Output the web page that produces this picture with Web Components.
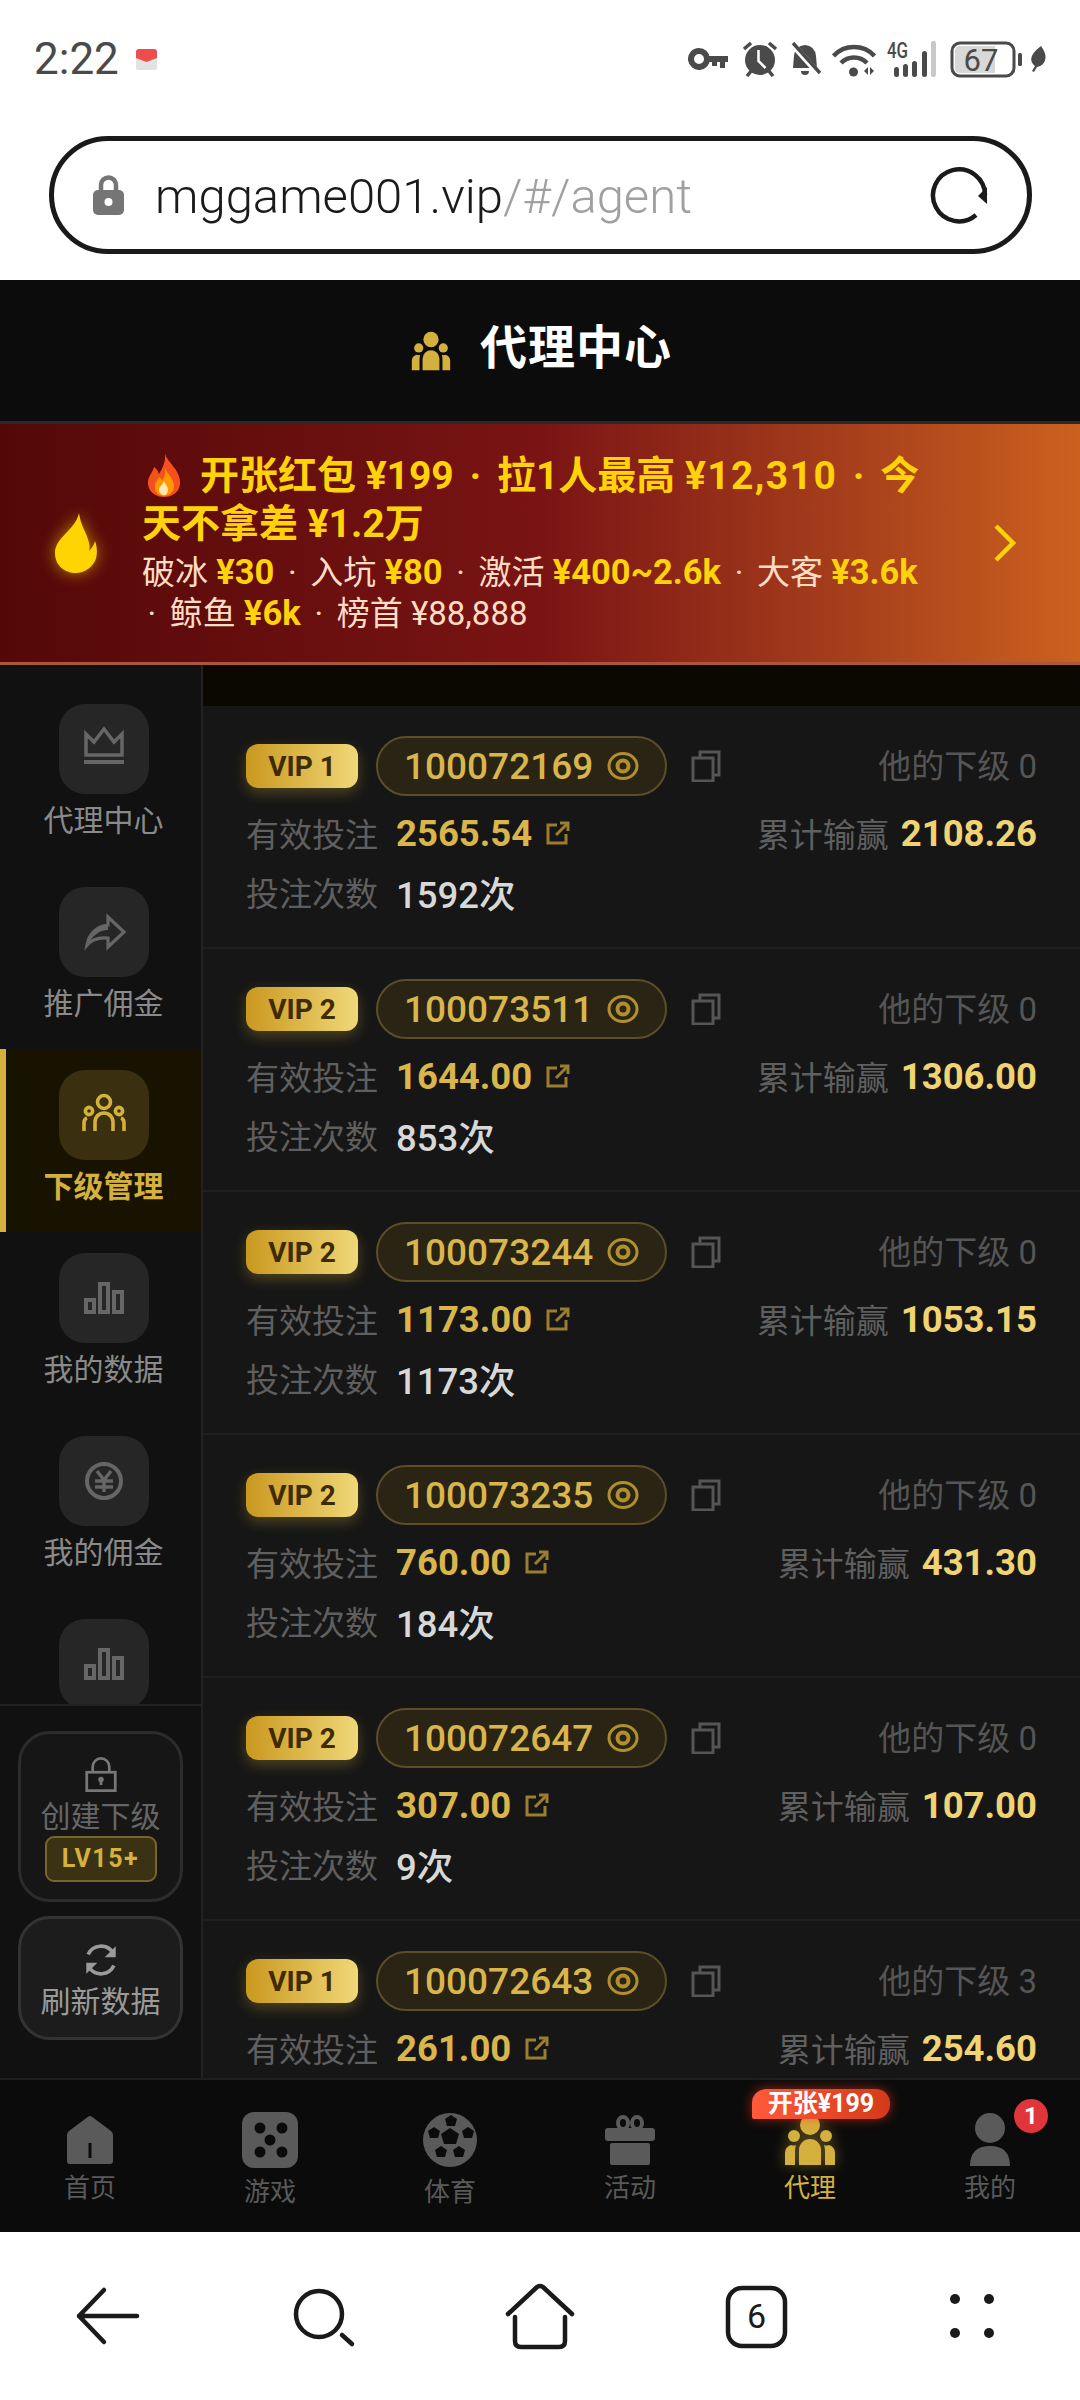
<!DOCTYPE html>
<html>
<head>
<meta charset="utf-8">
<style>
  html, body { margin: 0; padding: 0; background: #fff; }
  body { font-family: Roboto, "Noto Sans CJK SC", sans-serif; width: 1080px; height: 2400px; overflow: hidden; display: flex; flex-direction: column; }
  .fill { height: 1413px; flex: none; display: flex; overflow: hidden; }
  promo-banner b { color: #ffd20a; font-size: 34.500px; }
  promo-banner i { font-style: normal; margin: 0 5.500px; }
  promo-banner em { font-style: normal; letter-spacing: 1.4px; }
  promo-banner [slot="title"] i { margin: 0 6px; }
</style>
</head>
<body>
<status-bar></status-bar>
<url-bar host="mggame001.vip" path="/#/agent"></url-bar>
<agent-header>代理中心</agent-header>
<promo-banner>
  <span slot="title">开张红包 ¥199 <i>·</i> 拉1人最高 <em>¥12,310</em> <i>·</i> 今天不拿差 ¥1.2万</span>
  <span slot="sub">破冰 <b>¥30</b> <i>·</i> 入坑 <b>¥80</b> <i>·</i> 激活 <b>¥400~2.6k</b> <i>·</i> 大客 <b>¥3.6k</b> <i>·</i> 鲸鱼 <b>¥6k</b> <i>·</i> 榜首 ¥88,888</span>
</promo-banner>
<div class="fill">
  <side-nav>
    <side-item icon="crown">代理中心</side-item>
    <side-item icon="share">推广佣金</side-item>
    <side-item icon="team" active>下级管理</side-item>
    <side-item icon="bars">我的数据</side-item>
    <side-item icon="coin">我的佣金</side-item>
    <side-item icon="bars"></side-item>
    <side-action slot="footer" icon="lock" level="LV15+" dim>创建下级</side-action>
    <side-action slot="footer" icon="sync">刷新数据</side-action>
  </side-nav>
  <member-list>
    <member-card vip="VIP 1" uid="100072169" bet="2565.54" win="2108.26" count="1592次" subs="0"></member-card>
    <member-card vip="VIP 2" uid="100073511" bet="1644.00" win="1306.00" count="853次" subs="0"></member-card>
    <member-card vip="VIP 2" uid="100073244" bet="1173.00" win="1053.15" count="1173次" subs="0"></member-card>
    <member-card vip="VIP 2" uid="100073235" bet="760.00" win="431.30" count="184次" subs="0"></member-card>
    <member-card vip="VIP 2" uid="100072647" bet="307.00" win="107.00" count="9次" subs="0"></member-card>
    <member-card vip="VIP 1" uid="100072643" bet="261.00" win="254.60" subs="3"></member-card>
  </member-list>
</div>
<bottom-nav>
  <nav-item icon="home">首页</nav-item>
  <nav-item icon="game" low>游戏</nav-item>
  <nav-item icon="ball" low>体育</nav-item>
  <nav-item icon="gift">活动</nav-item>
  <nav-item icon="agent" active tag="开张¥199">代理</nav-item>
  <nav-item icon="me" dot="1">我的</nav-item>
</bottom-nav>
<system-nav></system-nav>

<script>
const FONT = 'Roboto, "Noto Sans CJK SC", sans-serif';

const AGENT_SHAPE = `
  <circle cx="30" cy="15" r="10"/><circle cx="14" cy="26" r="6"/><circle cx="46" cy="26" r="6"/>
  <path d="M19 55V40a11 11 0 0 1 22 0v15z"/>
  <path d="M5 55V43q0-6 6-8q3 1 5 0q-1 3-1 6v14z"/><path d="M55 55V43q0-6-6-8q-3 1-5 0q1 3 1 6v14z"/>`;

const SIDE_ICONS = {
  crown: `<path d="M7 10l8 8 10-13 10 13 8-8v21H7z" fill="none" stroke="currentColor" stroke-width="3.500"/><rect x="5" y="36" width="40" height="4" fill="currentColor"/>`,
  share: `<path d="M29 10l16 15-16 15v-9c-10-1-16 1-21 7 2-11 10-19 21-20z" fill="none" stroke="currentColor" stroke-width="3.200"/><path d="M8 38c2-11 10-18 21-20v5c-9 0-15 6-21 15z" fill="currentColor"/>`,
  team: `<g fill="none" stroke="currentColor" stroke-width="3.600"><circle cx="25" cy="12" r="6.500"/><circle cx="10" cy="21" r="3.600"/><circle cx="40" cy="21" r="3.600"/><path d="M16 41V32a9 9 0 0 1 18 0v9"/><path d="M5 41V33q0-4 3-5"/><path d="M45 41V33q0-4-3-5"/></g>`,
  bars: `<g fill="none" stroke="currentColor" stroke-width="4"><rect x="7" y="27" width="8" height="12"/><rect x="21" y="11" width="8" height="28"/><rect x="35" y="19" width="8" height="20"/></g>`,
  coin: `<circle cx="25" cy="25" r="17" fill="none" stroke="currentColor" stroke-width="4"/><path d="M18 15l7 9 7-9M16 25h18M16 31h18M25 24v12" fill="none" stroke="currentColor" stroke-width="3.400"/>`,
  lock: `<path d="M16 22v-6a9 9 0 0 1 18 0v6" fill="none" stroke="currentColor" stroke-width="3"/><rect x="9.500" y="22" width="31" height="20" fill="none" stroke="currentColor" stroke-width="3"/><circle cx="25" cy="30" r="3" fill="currentColor"/><rect x="23.500" y="30" width="3" height="6" fill="currentColor"/>`,
  sync: `<g fill="none" stroke="currentColor" stroke-width="4"><path d="M11 19a15.500 15.500 0 0 1 27-2"/><path d="M39 31a15.500 15.500 0 0 1-27 2"/></g><path d="M41 10v12H29zM9 40V28h12z" fill="currentColor"/>`
};

const NAV_ICONS = {
  home: `<path d="M30 6q1.500 0 3 1.500L51 21q2 2 2 4v26q0 3-3 3H10q-3 0-3-3V25q0-2 2-4L27 7.500Q28.500 6 30 6z"/><rect x="28.500" y="33" width="3" height="15" fill="#0b0b0b"/>`,
  game: `<rect x="2" y="2" width="56" height="56" rx="12"/><g fill="#0b0b0b"><circle cx="20" cy="18" r="5.500"/><circle cx="42" cy="18" r="5.500"/><circle cx="30" cy="30" r="5.500"/><circle cx="20" cy="42" r="5.500"/><circle cx="42" cy="42" r="5.500"/></g>`,
  ball: `<circle cx="30" cy="30" r="27"/><g fill="#0b0b0b"><path d="M31 5l6 4-2 7h-8l-2-7z"/><path d="M14 17l6 4-2 7h-8l-2-7z"/><path d="M48 17l6 4-2 7h-8l-2-7z"/><path d="M30 18l9 6-3 10H24l-3-10z"/><path d="M21 36l6 4-2 7h-8l-2-7z"/><path d="M39 36l6 4-2 7h-8l-2-7z"/></g>`,
  gift: `<g fill="none" stroke="#5a5a5a" stroke-width="4"><ellipse cx="23" cy="13" rx="5" ry="6"/><ellipse cx="37" cy="13" rx="5" ry="6"/></g><rect x="5" y="18" width="50" height="13" rx="3"/><rect x="10" y="33" width="40" height="22" rx="2"/>`,
  agent: AGENT_SHAPE,
  me: `<ellipse cx="30" cy="18" rx="15" ry="15"/><path d="M10 56q0-20 20-20t20 20z"/>`
};

class StatusBar extends HTMLElement {
  constructor() {
    super();
    this.attachShadow({ mode: 'open' });
    this.shadowRoot.innerHTML = `
      <style>
        :host { display: flex; height: 118px; padding: 0 33px 0 34px; align-items: center; background: #fff; color: #4a4a4a; font-family: ${FONT}; }
        .time { font-size: 44px; line-height: 1; margin-right: 16px; }
        .right { margin-left: auto; display: flex; align-items: center; }
        svg { display: block; }
      </style>
      <span class="time">2:22</span>
      <svg width="23" height="22" viewBox="0 0 23 22"><rect x="1" y="5" width="21" height="17" rx="2" fill="#e2e2e2"/><path d="M1 4q0-3 3-3h15q3 0 3 3v6l-10.500 4L1 10z" fill="#ee4d4d"/></svg>
      <div class="right">
        <svg width="40" height="22" viewBox="0 0 40 22" fill="#4a4a4a"><path fill-rule="evenodd" d="M11 0a11 11 0 1 1-10.900 12.500A11 11 0 0 1 11 0zm0 6a5 5 0 1 0 0 10 5 5 0 0 0 0-10z"/><path d="M20 8h20v6h-3v6h-5v-6h-3v4h-5v-4h-4z"/></svg>
        <svg style="margin-left:14px" width="36" height="36" viewBox="0 0 36 36" fill="#4a4a4a"><circle cx="18" cy="19" r="15"/><path d="M16.500 9v11l7 7" fill="none" stroke="#fff" stroke-width="2.500"/><path d="M2 8l7-6M34 8l-7-6M5 35l5-6M31 35l-5-6" stroke="#4a4a4a" stroke-width="3.500" fill="none"/></svg>
        <svg style="margin-left:12px" width="31" height="34" viewBox="0 0 31 34" fill="#4a4a4a"><path d="M15 3q10 1 11 11l1 12H3l1-12q1-10 11-11z"/><path d="M11 29h8a4 4 0 0 1-8 0z"/><path d="M2 2l27 30" stroke="#fff" stroke-width="6"/><path d="M3 1l27 30" stroke="#4a4a4a" stroke-width="3.500"/></svg>
        <svg style="margin-left:11px" width="44" height="35" viewBox="0 0 44 35"><g fill="none" stroke="#4a4a4a" stroke-width="4.500"><path d="M1.500 14a28 28 0 0 1 41 0"/><path d="M9 21a18 18 0 0 1 26 0"/></g><circle cx="21.500" cy="30" r="4.500" fill="#4a4a4a"/><path d="M32 29l4-4v8zM38 25l4 4-4 4z" fill="#4a4a4a"/></svg>
        <svg style="margin-left:11px;margin-top:-4px" width="49" height="42" viewBox="0 -4 49 42"><text x="0" y="18" font-family="Roboto" font-size="22" font-weight="500" fill="#4a4a4a" textLength="21" lengthAdjust="spacingAndGlyphs">4G</text><g fill="#4a4a4a"><rect x="7" y="27" width="5" height="10" rx="2.500"/><rect x="16" y="24" width="5" height="13" rx="2.500"/><rect x="25" y="21" width="5" height="16" rx="2.500"/><rect x="35" y="11" width="5" height="26" rx="2.500"/></g><rect x="44" y="1" width="5" height="36" rx="2" fill="#c9c9c9"/></svg>
        <svg style="margin-left:14px" width="72" height="37" viewBox="0 0 72 37"><rect x="2" y="2" width="62" height="33" rx="8" fill="#fff" stroke="#4a4a4a" stroke-width="3"/><path d="M5 10q0-5 5-5h35v27H10q-5 0-5-5z" fill="#d8d8d8"/><text x="31" y="29.500" text-anchor="middle" font-family="Roboto" font-size="31" fill="#4a4a4a">67</text><rect x="68" y="12" width="4" height="13" rx="1.500" fill="#4a4a4a"/></svg>
        <svg style="margin-left:6px" width="19" height="26" viewBox="0 0 19 26"><path d="M13 0q8 11 2 18-3 3-6 3l-3 5-2-1 3-5Q-3 12 13 0z" fill="#4a4a4a"/></svg>
      </div>
    `;
  }
}
customElements.define('status-bar', StatusBar);

class UrlBar extends HTMLElement {
  constructor() {
    super();
    this.attachShadow({ mode: 'open' });
    this.shadowRoot.innerHTML = `
      <style>
        :host { display: block; background: #fff; padding: 18px 48px 26px 49px; font-family: ${FONT}; }
        .bar { height: 118px; box-sizing: border-box; border: 5px solid #1a1a1a; border-radius: 59px; display: flex; align-items: center; padding: 0 38px 0 39px; }
        .addr { margin-left: 31px; font-size: 49px; font-weight: 300; color: #1a1a1a; white-space: nowrap; margin-top: 2px; }
        .addr span { color: #a0a0a0; }
        svg { display: block; flex: none; }
        .reload { margin-left: auto; }
      </style>
      <div class="bar">
        <svg width="31" height="40" viewBox="0 0 31 40"><path d="M8 17V10a7.500 7.500 0 0 1 15 0v7" fill="none" stroke="#757575" stroke-width="4.500"/><rect x="0" y="15" width="31" height="25" rx="5" fill="#757575"/><circle cx="15.500" cy="27" r="4" fill="#fff"/></svg>
        <div class="addr">${this.getAttribute('host')}<span>${this.getAttribute('path')}</span></div>
        <svg class="reload" width="60" height="60" viewBox="0 0 60 60"><path d="M47 50A26 26 0 1 1 56 30" fill="none" stroke="#1a1a1a" stroke-width="4.500"/><path d="M58 22v17l-9-8z" fill="#1a1a1a"/></svg>
      </div>
    `;
  }
}
customElements.define('url-bar', UrlBar);

class AgentHeader extends HTMLElement {
  constructor() {
    super();
    this.attachShadow({ mode: 'open' });
    this.shadowRoot.innerHTML = `
      <style>
        :host { display: flex; height: 141px; background: #0c0c0c; align-items: center; justify-content: center; gap: 26px; color: #fff; font-family: ${FONT}; font-size: 47px; line-height: 50px; font-weight: 700; letter-spacing: 1px; border-bottom: 3px solid #2a2a2a; }
        .name { margin-top: -6px; }
        svg { display: block; fill: #d4b03e; }
      </style>
      <svg width="46" height="46" viewBox="0 0 60 60">${AGENT_SHAPE}</svg>
      <div class="name"><slot></slot></div>
    `;
  }
}
customElements.define('agent-header', AgentHeader);

class PromoBanner extends HTMLElement {
  constructor() {
    super();
    this.attachShadow({ mode: 'open' });
    this.shadowRoot.innerHTML = `
      <style>
        :host { display: flex; height: 241px; box-sizing: border-box; align-items: center; background: linear-gradient(90deg, #530808 0%, #7a1414 50%, #a63e1c 78%, #cb611e 100%); border-bottom: 3px solid #a8573a; font-family: ${FONT}; padding-left: 55px; }
        .flame { flex: none; filter: drop-shadow(0 0 8px rgba(255,190,0,.65)); }
        .text { margin-left: 45px; width: 785px; flex: none; }
        .title { font-size: 39px; line-height: 48px; font-weight: 700; color: #ffd20a; }
        .title svg { width: 38px; height: 43px; vertical-align: -8px; margin-left: 3px; margin-right: 17px; }
        .sub { font-size: 33px; line-height: 40px; color: #ffdcc4; margin-top: 4px; }
        .chev { margin-left: 66px; flex: none; }
      </style>
      <svg class="flame" width="42" height="60" viewBox="0 0 42 60"><path d="M24 0C26 14 32 20 34 30C35 34 34.500 36 34 38C37 35 39 32 40 28C43 36 42 44 40 48C36 56 28 60 21 60C9 60 0 52 0 40C0 24 20 18 24 0Z" fill="#ffd400"/></svg>
      <div class="text">
        <div class="title"><svg viewBox="0 0 38 43"><path d="M20 0c3 9 14 15 15 27 1 10-7 16-16 16S2 37 3 27c1-6 5-9 6-14 3 2 4 4 5 7 3-5 7-12 6-20z" fill="#f4511e"/><path d="M20 14c2 6 9 10 9 18 0 6-5 10-10 10S9 38 10 32c0-4 3-6 4-9 2 1 3 3 3 4 2-3 4-8 3-13z" fill="#ff9800"/><path d="M19 27c1 3 4 5 4 9 0 3-2 5-4 5s-5-2-5-5c0-4 4-5 5-9z" fill="#ffe9b0"/></svg><slot name="title"></slot></div>
        <div class="sub"><slot name="sub"></slot></div>
      </div>
      <svg class="chev" width="24" height="38" viewBox="0 0 24 38"><path d="M3 2l17 17L3 36" fill="none" stroke="#ffd20a" stroke-width="4.500"/></svg>
    `;
  }
}
customElements.define('promo-banner', PromoBanner);

class SideNav extends HTMLElement {
  constructor() {
    super();
    this.attachShadow({ mode: 'open' });
    this.shadowRoot.innerHTML = `
      <style>
        :host { display: flex; flex-direction: column; width: 203px; box-sizing: border-box; flex: none; background: #111; border-right: 2px solid #222; font-family: ${FONT}; }
        .scroll { height: 1039px; box-sizing: border-box; padding-top: 18px; overflow: hidden; flex: none; }
        .foot { flex: 1; border-top: 2px solid #222; padding: 25px 18px 0; display: flex; flex-direction: column; gap: 14px; }
      </style>
      <div class="scroll"><slot></slot></div>
      <div class="foot"><slot name="footer"></slot></div>
    `;
  }
}
customElements.define('side-nav', SideNav);

class SideItem extends HTMLElement {
  constructor() {
    super();
    this.attachShadow({ mode: 'open' });
    this.shadowRoot.innerHTML = `
      <style>
        :host { display: flex; flex-direction: column; align-items: center; height: 183px; box-sizing: border-box; padding: 21px 0 0 6px; color: #8a8a8a; font-size: 30px; line-height: 40px; position: relative; }
        :host([active]) { background: #181300; color: #d4b03e; font-weight: 700; }
        :host([active])::before { content: ""; position: absolute; left: 0; top: 0; bottom: 0; width: 6px; background: #d4b03e; }
        .box { width: 90px; height: 90px; border-radius: 26px; background: #262626; color: #666; display: flex; align-items: center; justify-content: center; margin-bottom: 7px; }
        :host([active]) .box { background: #3a2f0e; color: #d4b03e; }
        svg { display: block; }
      </style>
      <div class="box"><svg width="50" height="50" viewBox="0 0 50 50">${SIDE_ICONS[this.getAttribute('icon')]}</svg></div>
      <slot></slot>
    `;
  }
}
customElements.define('side-item', SideItem);

class SideAction extends HTMLElement {
  constructor() {
    super();
    this.attachShadow({ mode: 'open' });
    const level = this.getAttribute('level');
    this.shadowRoot.innerHTML = `
      <style>
        :host { display: flex; flex-direction: column; align-items: center; box-sizing: border-box; border: 3px solid #333; border-radius: 32px; background: #1c1c1c; padding: 24px 0 16px; color: #9a9a9a; font-size: 30px; line-height: 38px; }
        :host([dim]) { background: #161616; color: #666; padding-bottom: 17px; border-color: #2c2c2c; }
        :host([dim]) svg { color: #777; }
        svg { display: block; margin-top: -6px; }
        .lv { width: 112px; height: 46px; box-sizing: border-box; border: 2px solid #7a6528; border-radius: 9px; background: #3b3214; color: #d6b13f; font-weight: 700; font-size: 25px; letter-spacing: 1.5px; display: flex; align-items: center; justify-content: center; font-family: ${FONT}; }
      </style>
      <svg width="46" height="46" viewBox="0 0 50 50">${SIDE_ICONS[this.getAttribute('icon')]}</svg>
      <slot></slot>
      ${level ? `<div class="lv">${level}</div>` : ''}
    `;
  }
}
customElements.define('side-action', SideAction);

class MemberList extends HTMLElement {
  constructor() {
    super();
    this.attachShadow({ mode: 'open' });
    this.shadowRoot.innerHTML = `
      <style>
        :host { display: block; flex: 1; min-width: 0; overflow: hidden; background: #161616; }
        .strip { height: 41px; background: #0a0800; }
      </style>
      <div class="strip"></div>
      <slot></slot>
    `;
  }
}
customElements.define('member-list', MemberList);

class MemberCard extends HTMLElement {
  constructor() {
    super();
    this.attachShadow({ mode: 'open' });
    const a = (n) => this.getAttribute(n);
    this.shadowRoot.innerHTML = `
      <style>
        :host { display: block; height: 243px; box-sizing: border-box; padding: 30px 43px 26px; border-bottom: 2px solid #1f1f1f; background: #161616; font-family: ${FONT}; }
        .row { display: flex; align-items: center; }
        .top { height: 60px; margin-bottom: 9px; }
        .line { height: 56px; margin-bottom: 3px; font-size: 33px; color: #5f5f5f; white-space: nowrap; }
        .vip { width: 112px; height: 44px; border-radius: 12px; background: linear-gradient(90deg, #c9981f, #f0d878); color: #3f2b00; font-size: 28px; font-weight: 700; display: flex; align-items: center; justify-content: center; box-shadow: 0 5px 14px rgba(212,175,55,.3); }
        .pill { margin-left: 18px; height: 60px; box-sizing: border-box; border: 2px solid #5b4e28; border-radius: 30px; background: #2a2414; display: flex; align-items: center; padding: 0 26px; color: #d9b64c; font-size: 37px; font-weight: 500; gap: 14px; }
        .copy { margin-left: 24px; }
        .subs { margin-left: auto; font-size: 33px; color: #555; margin-top: -4px; }
        .val { font-size: 36.500px; font-weight: 700; margin-left: 18px; color: #d9b64c; }
        .win { color: #f0d372; margin-left: 12px; }
        .cnt { color: #d8d8d8; font-weight: 500; }
        .ext { margin-left: 14px; }
        .right { margin-left: auto; display: flex; align-items: center; }
        svg { display: block; flex: none; }
      </style>
      <div class="row top">
        <span class="vip">${a('vip')}</span>
        <span class="pill">${a('uid')}
          <svg width="32" height="30" viewBox="0 0 32 30"><g fill="none" stroke="#b08f2f"><ellipse cx="16" cy="15" rx="14" ry="12.500" stroke-width="3"/><circle cx="16" cy="15" r="5.500" stroke-width="4"/></g></svg>
        </span>
        <svg class="copy" width="30" height="32" viewBox="0 0 30 32"><g fill="none" stroke="#555" stroke-width="3"><rect x="2" y="8" width="20" height="23"/><path d="M9 8V2h19v23h-6"/></g></svg>
        <span class="subs">他的下级 ${a('subs')}</span>
      </div>
      <div class="row line">
        <span>有效投注</span><span class="val">${a('bet')}</span>
        <svg class="ext" width="24" height="24" viewBox="0 0 24 24"><g fill="none" stroke="#9a7d2e" stroke-width="3"><path d="M11 4H2v18h18v-9"/><path d="M10 14L22 2"/><path d="M14 2h8v8"/></g></svg>
        <span class="right"><span>累计输赢</span><span class="val win">${a('win')}</span></span>
      </div>
      ${a('count') ? `<div class="row line"><span>投注次数</span><span class="val cnt">${a('count')}</span></div>` : ''}
    `;
  }
}
customElements.define('member-card', MemberCard);

class BottomNav extends HTMLElement {
  constructor() {
    super();
    this.attachShadow({ mode: 'open' });
    this.shadowRoot.innerHTML = `
      <style>
        :host { display: grid; grid-template-columns: repeat(6, 1fr); height: 154px; box-sizing: border-box; padding-top: 30px; background: #0b0b0b; border-top: 2px solid #1f1f1f; font-family: ${FONT}; flex: none; }
      </style>
      <slot></slot>
    `;
  }
}
customElements.define('bottom-nav', BottomNav);

class NavItem extends HTMLElement {
  constructor() {
    super();
    this.attachShadow({ mode: 'open' });
    const tag = this.getAttribute('tag');
    const dot = this.getAttribute('dot');
    this.shadowRoot.innerHTML = `
      <style>
        :host { display: flex; flex-direction: column; align-items: center; position: relative; color: #5a5a5a; font-size: 26px; line-height: 36px; }
        :host([active]) { color: #d4b03e; }
        :host([low]) .lb { margin-top: 4px; }
        svg { display: block; fill: #5a5a5a; }
        :host([active]) svg { fill: #d4b03e; filter: drop-shadow(0 0 7px rgba(212,176,62,.45)); }
        .tag { position: absolute; left: 32px; top: -21px; width: 138px; height: 30px; box-sizing: border-box; border-radius: 14px 14px 14px 2px; background: linear-gradient(90deg, #ff5a3a, #d33a1a); color: #fff; font-size: 25px; font-weight: 700; line-height: 30px; text-align: center; white-space: nowrap; box-shadow: 0 0 12px rgba(255,60,30,.55); z-index: 1; }
        .dot { position: absolute; left: 114px; top: -11px; width: 34px; height: 34px; border-radius: 50%; background: #e0353a; color: #fff; font-size: 24px; font-weight: 700; line-height: 34px; text-align: center; }
      </style>
      <svg width="60" height="60" viewBox="0 0 60 60">${NAV_ICONS[this.getAttribute('icon')]}</svg>
      <div class="lb"><slot></slot></div>
      ${tag ? `<span class="tag">${tag}</span>` : ''}
      ${dot ? `<span class="dot">${dot}</span>` : ''}
    `;
  }
}
customElements.define('nav-item', NavItem);

class SystemNav extends HTMLElement {
  constructor() {
    super();
    this.attachShadow({ mode: 'open' });
    this.shadowRoot.innerHTML = `
      <style>
        :host { display: grid; grid-template-columns: repeat(5, 216px); height: 168px; flex: none; background: #fff; align-items: center; justify-items: center; }
        svg { display: block; }
        g { fill: none; stroke: #1a1a1a; stroke-width: 4.500; stroke-linecap: round; stroke-linejoin: round; }
      </style>
      <svg width="70" height="70" viewBox="0 0 70 70"><g><path d="M31 9L6 35l25 26M6 35h58"/></g></svg>
      <svg width="70" height="70" viewBox="0 0 70 70"><g><circle cx="30" cy="33" r="23"/><path d="M53 54l10 9"/></g></svg>
      <svg width="70" height="70" viewBox="0 0 70 70"><g><path d="M3 33L32 6q3-2 6 0l29 27M10 36v24q0 6 6 6h38q6 0 6-6V36"/></g></svg>
      <svg width="70" height="70" viewBox="0 0 70 70"><g><rect x="7" y="7" width="57" height="58" rx="14"/></g><text x="35.500" y="47" text-anchor="middle" font-family="Roboto" font-size="34" fill="#1a1a1a">6</text></svg>
      <svg width="70" height="70" viewBox="0 0 70 70" fill="#1a1a1a"><circle cx="18" cy="18" r="5"/><circle cx="52" cy="18" r="5"/><circle cx="18" cy="52" r="5"/><circle cx="52" cy="52" r="5"/></svg>
    `;
  }
}
customElements.define('system-nav', SystemNav);
</script>
</body>
</html>
